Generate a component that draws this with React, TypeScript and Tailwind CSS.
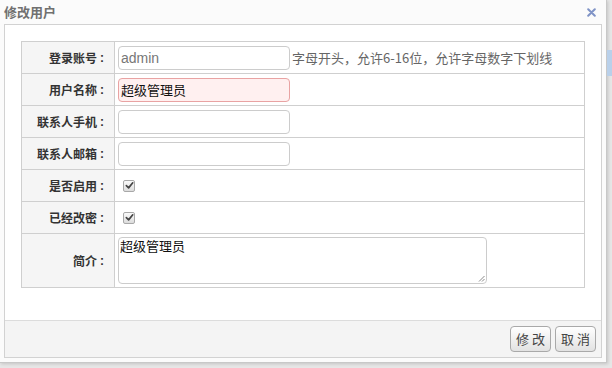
import React from "react";

const cjk = "font-['Noto_Sans_CJK_SC','Noto_Sans',sans-serif]";

function Check() {
  return (
    <span className="inline-flex h-[12px] w-[12px] items-center justify-center rounded-[2px] border border-[#a8a8a8] bg-gradient-to-b from-[#fafafa] to-[#dcdcdc]">
      <svg width="9" height="9" viewBox="0 0 10 10">
        <path d="M1.5 5.2 L4 7.6 L8.6 2" fill="none" stroke="#444" strokeWidth="1.9" strokeLinecap="round" strokeLinejoin="round" />
      </svg>
    </span>
  );
}

function Row({ label, h = "h-[32px]", children }: { label: string; h?: string; children?: React.ReactNode }) {
  return (
    <div className={`flex ${h} border-b border-[#cfcfcf] last:border-b-0`}>
      <div className={`flex w-[93px] shrink-0 items-center justify-end border-r border-[#cfcfcf] bg-[#f5f5f5] pr-[10px] text-[12px] font-bold text-[#333] ${cjk}`}>
        <span>{label}</span>
        <span className="ml-[3px] font-['Liberation_Sans',sans-serif] text-[12px] font-bold">:</span>
      </div>
      <div className="flex flex-1 items-center pl-[3px]">{children}</div>
    </div>
  );
}

function Input({ value = "", pink = false, gray = false }: { value?: string; pink?: boolean; gray?: boolean }) {
  return (
    <div
      className={`flex h-[24px] w-[172px] items-center rounded-[4px] border px-[2px] ${
        pink ? "border-[#e9a3a3] bg-[#fff0f0]" : "border-[#cccccc] bg-white"
      }`}
    >
      <span
        className={`text-[13px] leading-none ${
          gray ? "font-['Liberation_Sans',sans-serif] text-[14px] text-[#777]" : `${cjk} text-[#111]`
        }`}
      >
        {value}
      </span>
    </div>
  );
}

export default function App() {
  return (
    <div className="relative h-[368px] w-[612px] overflow-hidden bg-[#e6e6e6]">
      <div className="absolute right-0 top-[50px] h-[26px] w-[5px] bg-[#b9d0ea]" />
      <div className="flex h-[363px] w-[607px] flex-col border-b border-r border-[#c8c8c8] bg-[#fbfbfb] shadow-[1px_1px_3px_rgba(0,0,0,0.15)]">
        <div className="flex h-[24px] items-center justify-between pl-[4px] pr-[10px]">
          <span className={`text-[13px] font-bold text-[#707070] ${cjk}`}>修改用户</span>
          <svg width="9" height="9" viewBox="0 0 9 9">
            <path d="M1.2 1.2 L7.8 7.8 M7.8 1.2 L1.2 7.8" stroke="#7f93c6" strokeWidth="2" strokeLinecap="round" />
          </svg>
        </div>
        <div className="mx-[4px] mb-[4px] flex flex-1 flex-col border border-[#d2d2d2] bg-white">
          <div className="flex-1 pl-[16px] pt-[16px]">
            <div className="w-[564px] border border-[#cfcfcf]">
              <Row label="登录账号">
                <Input value="admin" gray />
                <span className={`ml-[2px] text-[13px] text-[#666] ${cjk}`}>字母开头，允许6-16位，允许字母数字下划线</span>
              </Row>
              <Row label="用户名称">
                <Input value="超级管理员" pink />
              </Row>
              <Row label="联系人手机">
                <Input />
              </Row>
              <Row label="联系人邮箱">
                <Input />
              </Row>
              <Row label="是否启用">
                <span className="ml-[5px] flex">
                  <Check />
                </span>
              </Row>
              <Row label="已经改密">
                <span className="ml-[5px] flex">
                  <Check />
                </span>
              </Row>
              <Row label="简介" h="h-[53px]">
                <div className="relative h-[47px] w-[369px] rounded-[4px] border border-[#cccccc] bg-white px-[1px]">
                  <span className={`block text-[13px] leading-[15px] text-[#111] ${cjk}`}>超级管理员</span>
                  <svg className="absolute bottom-[1px] right-[1px]" width="7" height="7" viewBox="0 0 7 7">
                    <path d="M6.5 1 L1 6.5 M6.5 4 L4 6.5" stroke="#888" strokeWidth="1" />
                  </svg>
                </div>
              </Row>
            </div>
          </div>
          <div className="flex h-[37px] items-center justify-end gap-[4px] border-t border-[#dcdcdc] bg-[#f4f4f4] pr-[5px]">
            <button className={`h-[26px] w-[41px] rounded-[4px] border border-[#a9a9a9] bg-gradient-to-b from-white to-[#e2e2e2] text-[13px] text-[#444] ${cjk}`}>
              修 改
            </button>
            <button className={`h-[26px] w-[41px] rounded-[4px] border border-[#a9a9a9] bg-gradient-to-b from-white to-[#e2e2e2] text-[13px] text-[#444] ${cjk}`}>
              取 消
            </button>
          </div>
        </div>
      </div>
    </div>
  );
}
